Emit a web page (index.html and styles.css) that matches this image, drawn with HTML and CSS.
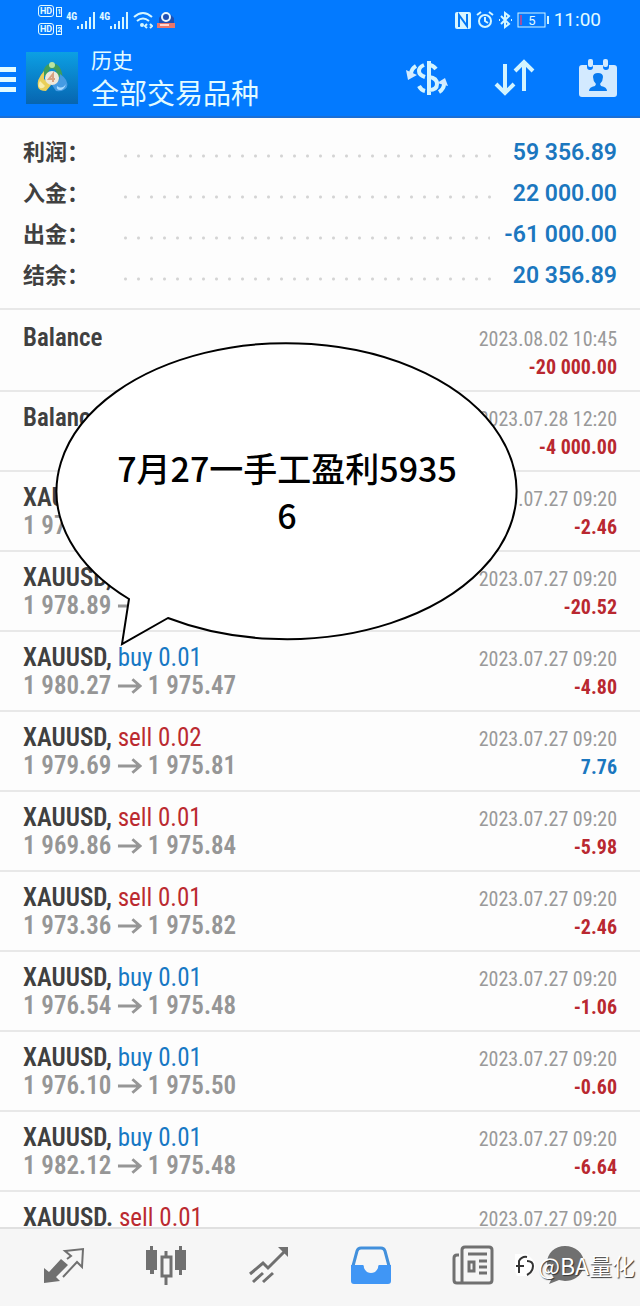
FILE: index.html
```html
<!DOCTYPE html>
<html lang="zh-CN">
<head>
<meta charset="utf-8">
<meta name="viewport" content="width=device-width, initial-scale=1">
<title>历史</title>
<link rel="stylesheet" href="styles.css">
</head>
<body>
<div class="app">
  <header class="top">
    <div class="status">
      <div class="status-left">
        <div class="hd"><span><b>HD</b><i>1</i></span><span><b>HD</b><i>2</i></span></div>
        <div class="signal"><span>4G</span>
          <svg width="18" height="17" viewBox="0 0 18 17"><path d="M1 17v-3M5 17v-5M9 17V9M13 17V5M17 17V0"/></svg></div>
        <div class="signal"><span>4G</span>
          <svg width="18" height="17" viewBox="0 0 18 17"><path d="M1 17v-3M5 17v-5M9 17V9M13 17V5M17 17V0"/></svg></div>
        <svg class="wifi" width="20" height="18" viewBox="0 0 20 18"><path d="M1 6Q10-2 19 6M4 10q6-5 12 0"/><circle cx="9" cy="14" r="2"/><path d="M14 13l-2 2 2 2M17 13l2 2-2 2"/></svg>
        <svg class="badge" width="18" height="18" viewBox="0 0 18 18"><path fill="#1e50b4" d="M2 7 7 1h4l6 6v6H2z"/><circle cx="9" cy="6" r="4" fill="none" stroke="#e8f8ff" stroke-width="2"/><path fill="#e8776c" d="M0 12h18v5H0z"/><path stroke="#ffd8d0" stroke-width="2" d="M3 14h9"/></svg>
      </div>
      <div class="status-right">
        <svg width="18" height="17" viewBox="0 0 18 17"><path fill="#d9f6ff" d="M3 0h12q2 0 2 2v13q0 2-2 2H3q-2 0-2-2V2q0-2 2-2z"/><path d="M5 15V3l8 11V2" fill="none" stroke="#0579f5" stroke-width="2"/></svg>
        <svg class="line" width="18" height="18" viewBox="0 0 18 18"><circle cx="9" cy="10" r="6"/><path d="M9 6v4l3 2M1 4l4-3M17 4l-4-3"/></svg>
        <svg class="line" width="15" height="18" viewBox="0 0 15 18"><path d="m3 5 8 8-4 3V2l4 3-8 8M1 9h1M13 9h1"/></svg>
        <svg class="battery" width="32" height="16" viewBox="0 0 32 16"><rect x="1" y="1" width="27" height="14"/><path class="cap" d="M31 4v8"/><path d="M4 3v10" class="low"/><text x="15" y="13" text-anchor="middle">5</text></svg>
        <time>11:00</time>
      </div>
    </div>
    <div class="bar">
      <button class="menu" aria-label="菜单"><span></span><span></span><span></span></button>
      <svg class="logo" width="52" height="52" viewBox="0 0 52 52">
        <defs><linearGradient id="bg" x2="0" y2="1"><stop stop-color="#0ca0e4"/><stop offset="1" stop-color="#0765b0"/></linearGradient></defs>
        <path fill="url(#bg)" d="M0 0h52v52H0z"/>
        <path fill="none" stroke="#3f9d5c" stroke-width="5" d="M19 24q1-10 7-10 7 0 8 11"/>
        <circle cx="26" cy="13" r="3" fill="#b9e4a0"/>
        <path fill="#e9cf5a" d="M18 19q-8 9-6 16 1 4 8 4l5-6-7-6z"/>
        <path fill="#f8edab" d="M14 29q-3 5 0 7 3 1 5-2z"/>
        <path fill="#459be3" d="M34 22q9 6 7 13-3 5-11 4l-4-6 7-4z"/>
        <path fill="#a9dbff" d="M31 34q5 4 9-2-2 6-6 6-4 0-3-4z"/>
        <circle cx="26" cy="26" r="7" fill="#eee8db"/><path d="M27 30v-8l-4 5h6" fill="none" stroke="#d6a282" stroke-width="2"/>
      </svg>
      <h1><small>历史</small>全部交易品种</h1>
      <button aria-label="货币"><svg width="44" height="36" viewBox="0 0 44 36"><path class="w" d="M24 1v34M31 9q-3-4-7-4M24 17q8 1 8 7 0 6-8 6M19 5q-5 2-5 6 0 4 6 6M20 31q-4-1-6-5"/><path class="w" d="M11 6Q6 9 6 14M34 32q5-3 5-8"/><path class="f" d="m1 10 2 10 9-5zM43 26l-3-8-8 5z"/></svg></button>
      <button aria-label="排序"><svg width="42" height="38" viewBox="0 0 42 38"><path class="w" d="M12 5v29M3 25l9 9 9-9M31 32V3M22 12l9-9 9 9"/></svg></button>
      <button aria-label="日期"><svg width="38" height="40" viewBox="0 0 38 40"><path class="f" d="M3 7h5v2q0 3 3 3t3-3V7h10v2q0 3 3 3t3-3V7h5q3 0 3 3v26q0 3-3 3H3q-3 0-3-3V10q0-3 3-3z"/><rect class="f" x="9" y="1" width="5" height="8" rx="2"/><rect class="f" x="24" y="1" width="5" height="8" rx="2"/><path fill="#087af0" d="M10 33q0-4 6-5l1-2q-3-3-3-7 0-4 5-4t5 4q0 4-3 7l1 2q6 1 6 5z"/></svg></button>
    </div>
  </header>

  <main>
    <dl class="summary">
      <div><dt>利润：</dt><dd>59 356.89</dd></div>
      <div><dt>入金：</dt><dd>22 000.00</dd></div>
      <div><dt>出金：</dt><dd>-61 000.00</dd></div>
      <div><dt>结余：</dt><dd>20 356.89</dd></div>
    </dl>
    <ul class="deals">
      <li><div><b>Balance</b></div><div class="r"><time>2023.08.02 10:45</time><strong>-20 000.00</strong></div></li>
      <li><div><b>Balance</b></div><div class="r"><time>2023.07.28 12:20</time><strong>-4 000.00</strong></div></li>
      <li><div><b>XAUUSD,</b> <p>1 97</p></div><div class="r"><time>2023.07.27 09:20</time><strong>-2.46</strong></div></li>
      <li><div><b>XAUUSD,</b> <p>1 978.89 <svg class="arrow" viewBox="0 0 26 16"><path d="M1 8h23M16 1l8 7-8 7"/></svg></p></div><div class="r"><time>2023.07.27 09:20</time><strong>-20.52</strong></div></li>
      <li><div><b>XAUUSD,</b> <span class="buy">buy 0.01</span><p>1 980.27 <svg class="arrow" viewBox="0 0 26 16"><path d="M1 8h23M16 1l8 7-8 7"/></svg> 1 975.47</p></div><div class="r"><time>2023.07.27 09:20</time><strong>-4.80</strong></div></li>
      <li><div><b>XAUUSD,</b> <span class="sell">sell 0.02</span><p>1 979.69 <svg class="arrow" viewBox="0 0 26 16"><path d="M1 8h23M16 1l8 7-8 7"/></svg> 1 975.81</p></div><div class="r"><time>2023.07.27 09:20</time><strong class="gain">7.76</strong></div></li>
      <li><div><b>XAUUSD,</b> <span class="sell">sell 0.01</span><p>1 969.86 <svg class="arrow" viewBox="0 0 26 16"><path d="M1 8h23M16 1l8 7-8 7"/></svg> 1 975.84</p></div><div class="r"><time>2023.07.27 09:20</time><strong>-5.98</strong></div></li>
      <li><div><b>XAUUSD,</b> <span class="sell">sell 0.01</span><p>1 973.36 <svg class="arrow" viewBox="0 0 26 16"><path d="M1 8h23M16 1l8 7-8 7"/></svg> 1 975.82</p></div><div class="r"><time>2023.07.27 09:20</time><strong>-2.46</strong></div></li>
      <li><div><b>XAUUSD,</b> <span class="buy">buy 0.01</span><p>1 976.54 <svg class="arrow" viewBox="0 0 26 16"><path d="M1 8h23M16 1l8 7-8 7"/></svg> 1 975.48</p></div><div class="r"><time>2023.07.27 09:20</time><strong>-1.06</strong></div></li>
      <li><div><b>XAUUSD,</b> <span class="buy">buy 0.01</span><p>1 976.10 <svg class="arrow" viewBox="0 0 26 16"><path d="M1 8h23M16 1l8 7-8 7"/></svg> 1 975.50</p></div><div class="r"><time>2023.07.27 09:20</time><strong>-0.60</strong></div></li>
      <li><div><b>XAUUSD,</b> <span class="buy">buy 0.01</span><p>1 982.12 <svg class="arrow" viewBox="0 0 26 16"><path d="M1 8h23M16 1l8 7-8 7"/></svg> 1 975.48</p></div><div class="r"><time>2023.07.27 09:20</time><strong>-6.64</strong></div></li>
      <li><div><b>XAUUSD.</b> <span class="sell">sell 0.01</span></div><div class="r"><time>2023.07.27 09:20</time></div></li>
    </ul>
  </main>

  <nav class="tabs">
    <button aria-label="行情"><svg width="42" height="38" viewBox="0 0 42 38"><path class="g" d="M1 22l5 4L18 13l7 6-12 12 4 4-16 2z"/><path class="s thin" d="M24 13l4-3-6-5 18-2-1 18-5-5-14 15"/></svg></button>
    <button aria-label="图表"><svg width="42" height="42" viewBox="0 0 42 42"><path class="g" d="M5 2h3v4h4v20H9v4H5v-4H1V6h4zM34 2h3v4h4v20h-4v5h-3v-5h-4V6h4z"/><path class="s" d="M17 13h9v19h-9zM21 13V7M21 32v9"/></svg></button>
    <button aria-label="交易"><svg width="40" height="38" viewBox="0 0 40 38"><path class="s" d="M1 28l13-11 5 5L37 4M4 36l10-9M14 36l10-9"/><path class="g" d="M29 1h10v10l-4-4z"/></svg></button>
    <button aria-label="历史" aria-current="page"><svg width="40" height="38" viewBox="0 0 40 38"><path fill="none" stroke="#4290dc" stroke-width="3" d="M2 20 6 5q1-3 4-3h20q3 0 4 3l4 15"/><path fill="#4096f5" d="M0 19h12q1 0 1 3 2 5 7 5t7-5q0-3 1-3h12v16q0 3-3 3H3q-3 0-3-3z"/></svg></button>
    <button aria-label="新闻"><svg width="42" height="40" viewBox="0 0 42 40"><path class="s" d="M13 2h24q3 0 3 3v30q0 3-3 3H5q-3 0-3-3V13q0-3 3-3h2M10 37V5q0-3 3-3M16 9h19M27 16h8M27 22h8M27 28h8"/><path class="s" d="M17 17h5v9h-5z"/></svg></button>
    <button aria-label="消息"><svg width="40" height="40" viewBox="0 0 40 40"><path class="g" d="M20 1c10 0 19 7 19 17S31 36 20 36l-6-1-10 4 4-8Q2 26 2 18C2 8 10 1 20 1z"/></svg></button>
  </nav>

  <aside class="bubble">
    <svg viewBox="0 0 464 304"><path d="M74 257A230 148 0 1 1 113 276L67 302Z"/></svg>
    <p>7月27一手工盈利5935<br>6</p>
  </aside>
  <div class="mark"><svg width="22" height="24" viewBox="0 0 22 24"><path fill="#fff" d="M1 1h12l8 8v7l-8 7H3L1 18z"/><path d="M5 20V8q3-5 8-4M2 13h8M13 22q6-3 6-9 0-5-6-5"/></svg><span>@BA量化</span></div>
</div>
</body>
</html>
```

FILE: styles.css
```css
* { box-sizing: border-box; margin: 0; padding: 0; }
body {
  font-family: Roboto, "Noto Sans CJK SC", sans-serif;
  color: #404040;
  background: #fdfdfd;
}
button { border: 0; background: none; display: flex; align-items: center; justify-content: center; }
.app { position: relative; height: 100vh; display: flex; flex-direction: column; overflow: hidden; }

.top { background: #037aff; height: 118px; flex: none; color: #e2fbff; border-bottom: 2px solid #1b6fd6; }
.status { height: 40px; display: flex; justify-content: space-between; padding: 0 39px 0 38px; }
.status-left, .status-right { display: flex; align-items: center; gap: 4px; }
.status svg { fill: none; stroke: #d4f6ff; stroke-width: 2; }
.hd { display: flex; flex-direction: column; gap: 6px; }
.hd span { display: flex; align-items: flex-end; gap: 2px; }
.hd b { font-size: 9px; line-height: 10px; border: 1px solid; border-radius: 3px; padding: 0 1px; }
.hd i { font: 700 7px/8px Roboto, sans-serif; border: 1px solid; }
.signal { display: flex; align-items: center; }
.signal span { font: 700 10px/10px "Roboto Condensed", Roboto, sans-serif; align-self: flex-start; }
.status .wifi { margin-left: 1px; }
.status .wifi circle { fill: #d4f6ff; stroke: none; }
.status .badge { stroke: none; }
.status-right svg:first-child path:first-child { stroke: none; }
.battery text { font: 13px Roboto, sans-serif; fill: #e2fbff; stroke: none; }
.status .battery { stroke-width: 1; }
.battery .cap { stroke-width: 2; }
.battery .low { stroke: #a050a0; stroke-width: 2; }
.status time { font-size: 19px; line-height: 20px; margin-left: 1px; }

.bar { height: 76px; display: flex; align-items: center; padding-right: 23px; }
.menu { flex-direction: column; gap: 5px; width: 16px; margin: 2px 10px 0 0; }
.menu span { width: 16px; height: 5px; background: #e2fbff; }
h1 { flex: 1; font: 400 28px/34px "Noto Sans CJK SC", sans-serif; margin: 0 0 3px 13px; }
h1 small { display: block; font-size: 21px; line-height: 31px; }
.bar button + button { margin-left: 44px; }
.w { fill: none; stroke: #d3f4ff; stroke-width: 4; }
.f { fill: #d3eaff; }

main { flex: 1; min-height: 0; overflow: hidden; }
.summary { padding: 14px 23px 12px; border-bottom: 2px solid #e8e8e8; }
.summary div { display: flex; align-items: center; height: 41px; }
.summary dt { width: 96px; padding-bottom: 5px; font: 700 22px/30px "Noto Sans CJK SC", sans-serif; }
.summary div::after {
  content: ""; order: 1; flex: 1; height: 6px; margin: 6px 14px 0 0;
  background: radial-gradient(circle, #d4d4d4 1px, transparent 2px) 0 0 / 13px 6px repeat-x;
}
.summary dd { order: 2; font-size: 23px; font-weight: 600; color: #1b77bf; }

.deals { list-style: none; padding-top: 2px; font-family: "Roboto Condensed", "Liberation Sans Narrow", Roboto, sans-serif; }
.deals li { height: 80px; padding: 12px 23px 0; border-bottom: 2px solid #e8e8e8; display: flex; justify-content: space-between; font-size: 25px; line-height: 28px; white-space: nowrap; }
.deals b { font-weight: 600; }
.deals p { color: #969696; font-weight: 600; }
.arrow { width: 25px; height: 16px; fill: none; stroke: #969696; stroke-width: 3; }
.buy { color: #1778c4; }
.sell { color: #bb2a30; }
.r { display: flex; flex-direction: column; align-items: flex-end; font-size: 20px; padding-top: 1px; }
.r time { color: #999; }
.r strong { color: #b92830; }
.r .gain { color: #1b77bf; }

.tabs { flex: none; height: 79px; background: #f6f6f6; border-top: 2px solid #e0e0e0; display: grid; grid-template-columns: repeat(6, 1fr); padding: 0 13px 5px; }
.tabs button:last-child { padding-right: 22px; }
.g { fill: #707070; }
.s { fill: none; stroke: #707070; stroke-width: 3; }
.thin { stroke-width: 2; }

.bubble { position: absolute; left: 55px; top: 342px; width: 464px; }
.bubble svg { display: block; width: 464px; fill: #fff; stroke: #000; stroke-width: 2; }
.bubble p { position: absolute; inset: 102px 0 auto; text-align: center; color: #000; font: 500 34px/47px "Noto Sans CJK SC", sans-serif; }
.mark { position: absolute; right: 5px; bottom: 25px; display: flex; align-items: center; gap: 2px; color: #fff; font: 23px/32px "Noto Sans CJK SC", sans-serif; text-shadow: 1px 1px 1px #333; }
.mark svg { fill: none; stroke: #333; stroke-width: 2; }
.mark path:first-child { stroke: none; }
```
